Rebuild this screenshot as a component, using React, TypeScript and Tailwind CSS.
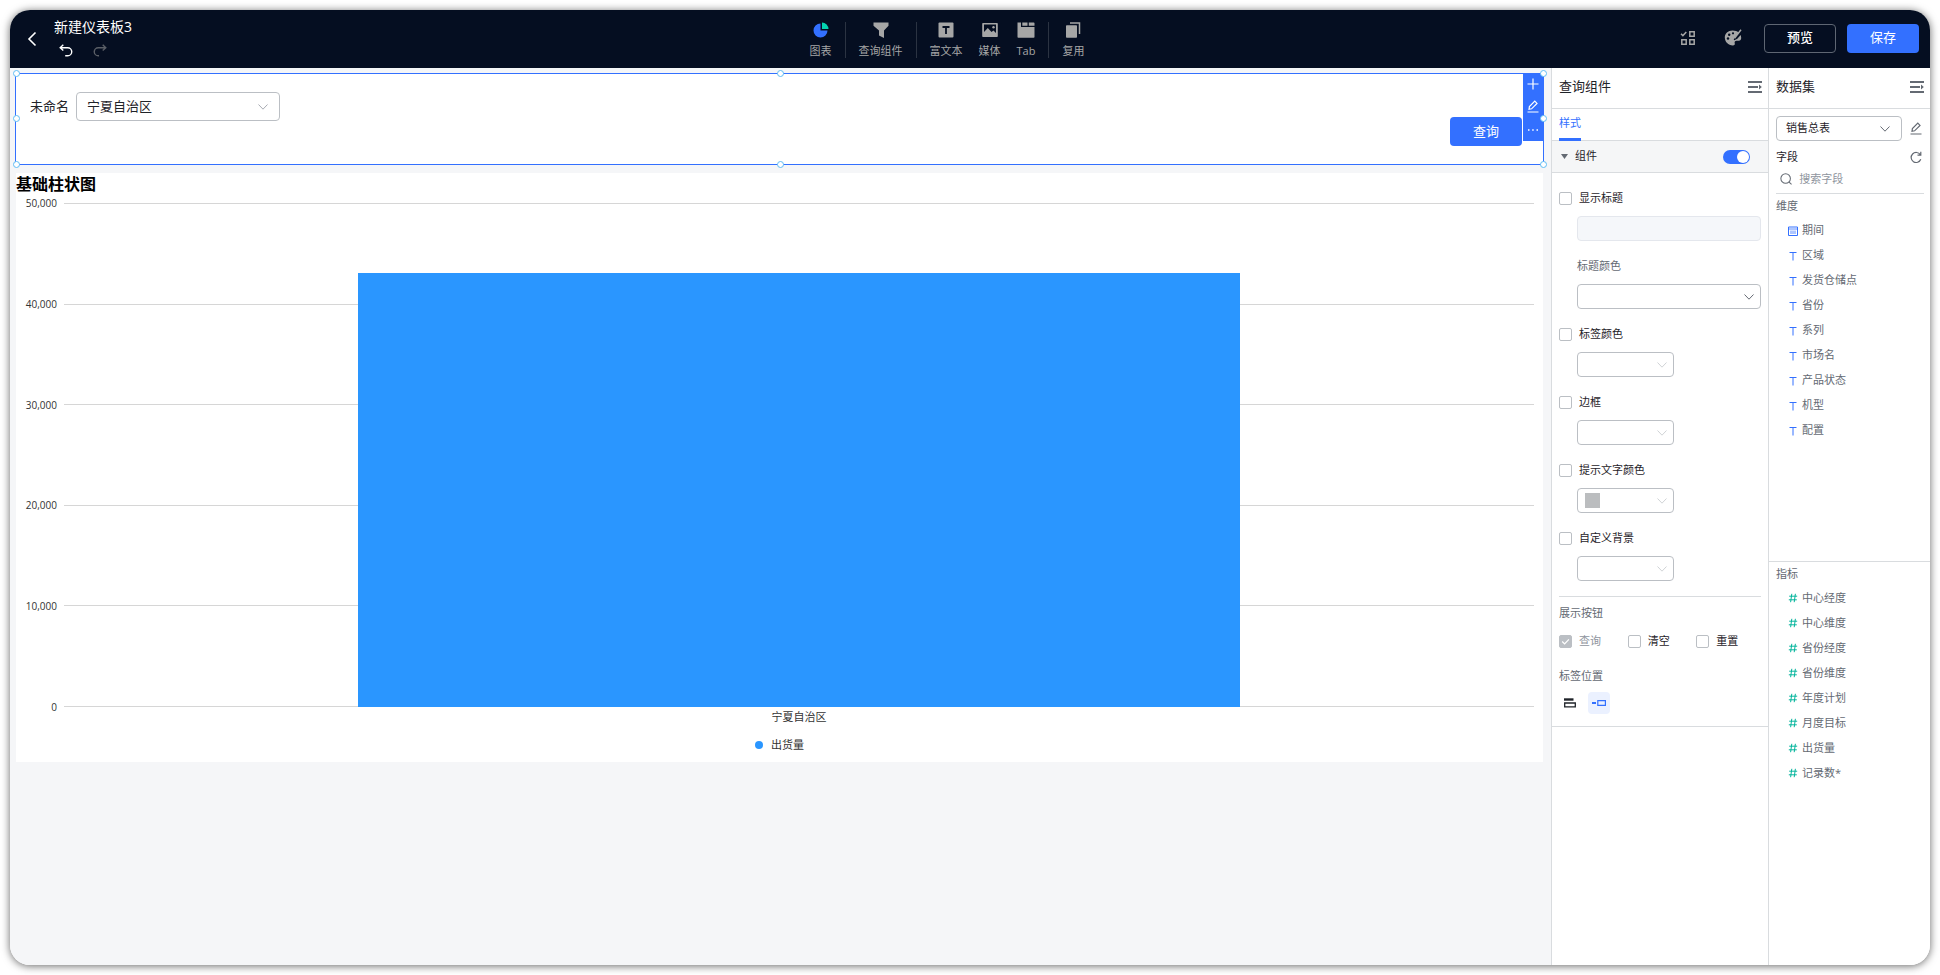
import { useState } from "react";
import type { ReactNode } from "react";

type IconProps = {
  className?: string;
};

const BackIcon = () => (
  <svg width="10" height="16" viewBox="0 0 10 16" fill="none" stroke="#fff" strokeWidth="1.6">
    <path d="M8.500 1.500L2 8l6.500 6.500" />
  </svg>
);

const UndoIcon = ({ className = "" }: IconProps) => (
  <svg className={className} width="14" height="14" viewBox="0 0 14 14" fill="none" stroke="currentColor" strokeWidth="1.4">
    <path d="M4.300 .8L1.200 3.700l3.100 2.900M1.400 3.700h7.300a4 4 0 0 1 0 8.100H6.200" />
  </svg>
);

const RedoIcon = ({ className = "" }: IconProps) => (
  <svg className={className} width="14" height="14" viewBox="0 0 14 14" fill="none" stroke="currentColor" strokeWidth="1.4">
    <path d="M9.700 .8l3.100 2.900-3.100 2.900M12.600 3.700H5.300a4 4 0 0 0 0 8.100h.7" />
  </svg>
);

const ChartIcon = () => (
  <svg width="16" height="16" viewBox="0 0 16 16">
    <path d="M7.500 1.500v7h7A7 7 0 1 1 7.500 1.500z" fill="#3370ff" />
    <path d="M9 .5A6.600 6.600 0 0 1 15.500 7H9z" fill="#04d3b0" />
  </svg>
);

const FunnelIcon = () => (
  <svg width="16" height="16" viewBox="0 0 16 16" fill="#a6a6a6">
    <path d="M.5.500h15v3.300L11 8.500V16l-5-2.500v-5L.5 3.800z" />
  </svg>
);

const RichTextIcon = () => (
  <svg width="16" height="16" viewBox="0 0 16 16">
    <rect x=".5" y=".5" width="15" height="15" rx="1" fill="#a6a6a6" />
    <path d="M4.500 5h7M8 5v7" stroke="#050e21" strokeWidth="1.800" />
  </svg>
);

const MediaIcon = () => (
  <svg width="16" height="16" viewBox="0 0 16 16">
    <path d="M1 1h14a.8.8 0 0 1 .8.8v12.400a.8.8 0 0 1-.8.8H1a.8.8 0 0 1-.8-.8V1.800A.8.8 0 0 1 1 1z" fill="#a6a6a6" />
    <path d="M2 2.500h12v8.500L11.500 8.500 9.500 10 5.800 6 2 10z" fill="#050e21" />
    <circle cx="11.500" cy="5.200" r="1.200" fill="#a6a6a6" />
  </svg>
);

const TabIcon = () => (
  <svg width="18" height="16" viewBox="0 0 18 16" fill="#a6a6a6">
    <path d="M.5.500h3.500v4.500h13.500v10a.8.8 0 0 1-.8.8H1.300a.8.8 0 0 1-.8-.8z" />
    <path d="M5.300.500h5.200v3.200H5.300zM11.800.500h4.900a.8.8 0 0 1 .8.8v2.400h-5.700z" />
  </svg>
);

const ReuseIcon = () => (
  <svg width="16" height="16" viewBox="0 0 16 16">
    <path d="M5 1h9.500v11" fill="none" stroke="#a6a6a6" strokeWidth="1.500" />
    <rect x="1" y="3.200" width="11" height="12.500" rx=".8" fill="#a6a6a6" />
  </svg>
);

const BatchIcon = () => (
  <svg width="16" height="16" viewBox="0 0 16 16" fill="none" stroke="#a6a6a6" strokeWidth="1.500">
    <path d="M1 3.700l1.900 1.900L6.300 2M9.800 1.800h4.400v4.400H9.800zM1.800 9.800h4.400v4.400H1.800zM9.800 9.800h4.400v4.400H9.800z" />
  </svg>
);

const PaletteIcon = () => (
  <svg width="18" height="18" viewBox="0 0 18 18">
    <path d="M8.500 1.500C4 1.500.8 4.500.8 8.600c0 4.300 3.500 7.900 8 7.900 2 0 2.200-1.300 1.900-2.500-.3-1.300.3-2.300 1.800-2.300h2.300c1.500 0 2.400-1.100 2.400-2.700 0-1-.2-2-.6-2.900l-3.300 3.600-3 1.600-.6-.6 1.500-3 4-4C13.400 2.200 11 1.500 8.500 1.500z" fill="#a6a6a6" />
    <path d="M17 .8l-6.500 8.400" stroke="#a6a6a6" strokeWidth="1.500" />
    <circle cx="4" cy="9.500" r="1.200" fill="#050e21" />
    <circle cx="5.200" cy="5.800" r="1.200" fill="#050e21" />
    <circle cx="9" cy="4.300" r="1.100" fill="#050e21" />
  </svg>
);

const CollapseIcon = () => (
  <svg width="14" height="14" viewBox="0 0 14 14" fill="#646a73">
    <path d="M0 1h14v2H0zM0 6h10v2H0zM0 11h14v2H0zM11 4.500L13.800 7 11 9.500z" />
  </svg>
);

const ChevronIcon = ({ className = "" }: IconProps) => (
  <svg className={className} width="10" height="6" viewBox="0 0 10 6" fill="none" stroke="currentColor" strokeWidth="1">
    <path d="M.5.500L5 5.200 9.500.500" />
  </svg>
);

const PencilIcon = ({ className = "" }: IconProps) => (
  <svg className={className} width="12" height="13" viewBox="0 0 12 13" fill="none" stroke="currentColor" strokeWidth="1.200">
    <path d="M2 9.300l.4-2.700L7.800 1.200l2.200 2.200-5.400 5.400zM.5 12h11" />
  </svg>
);

const RefreshIcon = () => (
  <svg width="12" height="13" viewBox="0 0 12 13" fill="none" stroke="#646a73" strokeWidth="1.200">
    <path d="M10.800 8.300a5 5 0 1 1-.5-4.600M10.800.800v3.400H7.500" />
  </svg>
);

const SearchIcon = () => (
  <svg width="14" height="14" viewBox="0 0 14 14" fill="none" stroke="#646a73" strokeWidth="1.200">
    <circle cx="6.500" cy="6.500" r="5.500" />
    <path d="M10.500 10.500l2.800 2.800" />
  </svg>
);

const CalendarIcon = () => (
  <svg width="10" height="10" viewBox="0 0 10 10" fill="none" stroke="#3370ff">
    <path d="M.5 1h9v8.500h-9z" />
    <path d="M.5 3h9M3 4.500v3.500M5 4.500v3.500M7 4.500v3.500" strokeWidth=".8" />
  </svg>
);

const TextFieldIcon = () => (
  <svg width="10" height="10" viewBox="0 0 10 10" fill="none" stroke="#3370ff" strokeWidth="1">
    <path d="M1.500 1.500h7M5 1.500V9.500" />
  </svg>
);

const NumberFieldIcon = () => (
  <svg width="10" height="10" viewBox="0 0 10 10" fill="none" stroke="#04b49c" strokeWidth="1">
    <path d="M3.800.800L2.600 9.200M7.400.800L6.200 9.200M1.200 3.200h8M.8 6.800h8" />
  </svg>
);

const tools: { label: string; icon: ReactNode; divider?: boolean }[] = [
  { label: "图表", icon: <ChartIcon />, divider: true },
  { label: "查询组件", icon: <FunnelIcon />, divider: true },
  { label: "富文本", icon: <RichTextIcon /> },
  { label: "媒体", icon: <MediaIcon /> },
  { label: "Tab", icon: <TabIcon />, divider: true },
  { label: "复用", icon: <ReuseIcon /> },
];

const Header = () => (
  <header className="flex h-[58px] shrink-0 items-center justify-between bg-[#050e21] pr-[11px] pl-[17px]">
    <div className="flex w-[187px] items-center gap-[17px]">
      <button type="button" aria-label="返回">
        <BackIcon />
      </button>
      <div className="flex flex-col gap-[7px] pb-[3px]">
        <h1 className="text-sm leading-5 text-white">新建仪表板3</h1>
        <div className="flex gap-5 pl-[5px]">
          <button type="button" aria-label="撤销" className="text-white">
            <UndoIcon />
          </button>
          <button type="button" aria-label="重做" className="text-[#5a5e66]">
            <RedoIcon />
          </button>
        </div>
      </div>
    </div>
    <nav className="flex items-center pt-[2px]">
      {tools.map((tool) => (
        <div key={tool.label} className="flex items-center">
          <button
            type="button"
            className="flex flex-col items-center gap-[5px] px-2 text-[11px] leading-4 text-[#a6a6a6]"
          >
            {tool.icon}
            {tool.label}
          </button>
          {tool.divider && <span className="mx-[5px] h-9 w-px bg-[#2b3342]" />}
        </div>
      ))}
    </nav>
    <div className="flex items-center pb-[2px]">
      <button type="button" aria-label="批量设置" className="mr-7">
        <BatchIcon />
      </button>
      <button type="button" aria-label="外观" className="mr-[22px]">
        <PaletteIcon />
      </button>
      <button
        type="button"
        className="mr-[11px] h-[29px] w-[72px] rounded-sm border border-[#5f6673] text-[13px] font-medium text-white"
      >
        预览
      </button>
      <button type="button" className="h-[29px] w-[72px] rounded-sm bg-[#3370ff] text-[13px] text-white">
        保存
      </button>
    </div>
  </header>
);

const handles = [
  "-top-1 -left-[3px]",
  "-top-1 left-1/2 -ml-[3px]",
  "-top-1 -right-1",
  "top-1/2 -mt-1 -left-[3px]",
  "top-1/2 -mt-1 -right-1",
  "-bottom-1 -left-[3px]",
  "-bottom-1 left-1/2 -ml-[3px]",
  "-bottom-1 -right-1",
];

const QueryBar = () => (
  <section className="relative mr-[7px] ml-[5px] flex h-[92px] justify-between border border-[#3370ff] bg-white pt-[18px] pr-[21px] pl-[14px]">
    <div className="flex h-[29px] items-center gap-[7px]">
      <label htmlFor="region" className="text-[13px] text-[#1f2329]">
        未命名
      </label>
      <div className="relative">
        <select
          id="region"
          className="h-[29px] w-[204px] appearance-none rounded-sm border border-[#bbbfc4] bg-white pl-[10px] text-[13px] text-[#1f2329]"
        >
          <option>宁夏自治区</option>
        </select>
        <ChevronIcon className="pointer-events-none absolute top-3 right-3 text-[#a8abb2]" />
      </div>
    </div>
    <button type="button" className="mt-[25px] h-[29px] w-[72px] rounded-sm bg-[#3370ff] text-[13px] text-white">
      查询
    </button>
    <div className="absolute -top-px right-0 flex w-5 flex-col items-center bg-[#3370ff] text-white">
      <button type="button" aria-label="添加" className="flex h-[22px] items-center">
        <svg width="12" height="12" viewBox="0 0 12 12" stroke="currentColor" strokeWidth="1.200">
          <path d="M6 .5v11M.5 6h11" />
        </svg>
      </button>
      <button type="button" aria-label="编辑" className="flex h-[23px] items-center">
        <PencilIcon />
      </button>
      <button type="button" aria-label="更多" className="flex h-[23px] items-center">
        <svg width="10" height="2" viewBox="0 0 10 2" fill="currentColor">
          <path d="M0 .3h1.500v1.500H0zM4.200.300h1.500v1.500H4.200zM8.500.300H10v1.500H8.500z" />
        </svg>
      </button>
    </div>
    {handles.map((position) => (
      <span key={position} className={`absolute size-[7px] rounded-full border border-[#60bdf5] bg-white ${position}`} />
    ))}
  </section>
);

const axisMax = 50000;
const ticks = ["50,000", "40,000", "30,000", "20,000", "10,000", "0"];
const bars = [{ name: "宁夏自治区", value: 43050 }];

const BarChart = () => (
  <section className="mt-2 mr-2 ml-[6px] bg-white pb-[9px]">
    <h2 className="text-base leading-[22px] font-bold text-black">基础柱状图</h2>
    <div className="flex gap-[7px] pr-[9px] pl-[9px]">
      <div className="flex h-[520px] w-8 flex-col justify-between text-right text-[10px] leading-4 text-[#333]">
        {ticks.map((tick) => (
          <span key={tick}>{tick}</span>
        ))}
      </div>
      <div className="flex-1">
        <div className="relative mt-2 h-[504px]">
          <div className="flex h-full flex-col justify-between">
            {ticks.map((tick) => (
              <span key={tick} className="h-px bg-[#d6d6d6]" />
            ))}
          </div>
          <div className="absolute inset-0 flex items-end">
            {bars.map((bar) => (
              <div key={bar.name} className="flex h-full flex-1 items-end px-[20%]">
                <div className="w-full bg-[#2a96ff]" style={{ height: `${(bar.value / axisMax) * 100}%` }} />
              </div>
            ))}
          </div>
        </div>
        <div className="flex pt-[2px]">
          {bars.map((bar) => (
            <span key={bar.name} className="flex-1 text-center text-[11px] leading-4 text-[#333]">
              {bar.name}
            </span>
          ))}
        </div>
      </div>
    </div>
    <div className="mt-3 flex items-center justify-center gap-2 text-[11px] leading-4 text-[#333]">
      <span className="size-2 rounded-full bg-[#2a96ff]" />
      出货量
    </div>
  </section>
);

type CheckProps = {
  id: string;
  label: string;
  disabled?: boolean;
};

const Check = ({ id, label, disabled = false }: CheckProps) => (
  <div className="flex h-4 items-center gap-[7px]">
    <span className="relative flex">
      <input
        id={id}
        type="checkbox"
        defaultChecked={disabled}
        disabled={disabled}
        className="size-[13px] appearance-none rounded-[2px] border border-[#bbbfc4] bg-white checked:border-[#3370ff] checked:bg-[#3370ff] disabled:border-[#bbbfc4] disabled:bg-[#bbbfc4]"
      />
      {disabled && (
        <svg className="absolute inset-0" width="13" height="13" viewBox="0 0 13 13" fill="none" stroke="#fff" strokeWidth="1.200">
          <path d="M3.200 6.500l2.400 2.400 4.300-4.600" />
        </svg>
      )}
    </span>
    <label htmlFor={id} className={`text-[11px] leading-4 ${disabled ? "text-[#8f959e]" : "text-[#1f2329]"}`}>
      {label}
    </label>
  </div>
);

type ColorSelectProps = {
  label: string;
  wide?: boolean;
  swatch?: boolean;
};

const ColorSelect = ({ label, wide = false, swatch = false }: ColorSelectProps) => (
  <div className={`relative ml-[18px] h-[25px] ${wide ? "" : "w-[97px]"}`}>
    <select aria-label={label} className="h-full w-full appearance-none rounded-sm border border-[#bbbfc4] bg-white" />
    {swatch && <span className="pointer-events-none absolute top-[5px] left-2 size-[15px] bg-[#bbbdbf]" />}
    <ChevronIcon
      className={`pointer-events-none absolute top-[10px] right-[7px] ${wide ? "text-[#646a73]" : "text-[#d0d3d6]"}`}
    />
  </div>
);

const colorOptions = [
  { id: "label-color", label: "标签颜色" },
  { id: "border", label: "边框" },
  { id: "hint-color", label: "提示文字颜色", swatch: true },
  { id: "background", label: "自定义背景" },
];

const PanelTitle = ({ children }: { children: ReactNode }) => (
  <div className="flex h-[41px] shrink-0 items-center justify-between border-b border-[#d9dcdf] pr-[6px] pb-[3px] pl-[7px] text-[13px] text-[#1f2329]">
    <h2>{children}</h2>
    <button type="button" aria-label="收起">
      <CollapseIcon />
    </button>
  </div>
);

const StylePanel = () => {
  const [enabled, setEnabled] = useState(true);

  return (
    <aside className="w-[217px] shrink-0 border-l border-[#d9dcdf] bg-white">
      <PanelTitle>查询组件</PanelTitle>
      <div className="flex h-8 border-b border-[#d9dcdf] px-[7px]">
        <button type="button" className="-mb-px border-b-3 border-[#3370ff] text-[11px] text-[#3370ff]">
          样式
        </button>
      </div>
      <div className="flex h-8 items-center border-b border-[#d9dcdf] bg-[#f5f6f7] pr-[18px] pl-[9px] text-[11px] text-[#1f2329]">
        <svg width="7" height="5" viewBox="0 0 7 5" fill="#646a73">
          <path d="M0 0h7L3.500 5z" />
        </svg>
        <label htmlFor="component-enabled" className="ml-[7px] flex-1">
          组件
        </label>
        <input
          id="component-enabled"
          type="checkbox"
          role="switch"
          checked={enabled}
          onChange={() => setEnabled(!enabled)}
          className="flex h-[14px] w-[27px] appearance-none items-center rounded-full bg-[#bbbfc4] px-px before:size-3 before:rounded-full before:bg-white checked:justify-end checked:bg-[#3370ff]"
        />
      </div>
      <div className="border-b border-[#d9dcdf] pt-[17px] pr-[7px] pb-[12px] pl-[7px]">
        <div className="flex flex-col gap-[17px]">
          <div className="flex flex-col gap-[10px]">
            <Check id="show-title" label="显示标题" />
            <input
              aria-label="标题"
              disabled
              className="ml-[18px] h-[25px] rounded-sm border border-[#e4e7ed] bg-[#f5f7fa] px-2 text-[11px]"
            />
          </div>
          <div className="flex flex-col gap-[10px]">
            <span className="ml-[18px] text-[11px] leading-4 text-[#646a73]">标题颜色</span>
            <ColorSelect label="标题颜色" wide />
          </div>
          {colorOptions.map((option) => (
            <div key={option.id} className="flex flex-col gap-[10px]">
              <Check id={option.id} label={option.label} />
              <ColorSelect label={option.label} swatch={option.swatch} />
            </div>
          ))}
        </div>
        <hr className="mt-[15px] border-[#d9dcdf]" />
        <p className="mt-2 text-[11px] leading-4 text-[#646a73]">展示按钮</p>
        <div className="mt-3 grid grid-cols-3 gap-x-1">
          <Check id="button-query" label="查询" disabled />
          <Check id="button-clear" label="清空" />
          <Check id="button-reset" label="重置" />
        </div>
        <p className="mt-[19px] text-[11px] leading-4 text-[#646a73]">标签位置</p>
        <div className="mt-2 flex gap-[7px]">
          <button type="button" aria-label="顶部" className="flex size-[22px] items-center justify-center">
            <svg width="12" height="10" viewBox="0 0 12 10" fill="none" stroke="#1f2329" strokeWidth="1.300">
              <path d="M0 1.500h9.500" strokeWidth="2.400" />
              <path d="M.7 5h10.600v3.800H.7z" />
            </svg>
          </button>
          <button
            type="button"
            aria-label="左侧"
            className="flex size-[22px] items-center justify-center rounded-sm bg-[#ebf1ff]"
          >
            <svg width="14" height="6" viewBox="0 0 14 6" fill="none" stroke="#3370ff" strokeWidth="1.200">
              <path d="M0 3h4" strokeWidth="2" />
              <path d="M5.800.700h7.600v4.600H5.800z" />
            </svg>
          </button>
        </div>
      </div>
    </aside>
  );
};

const dimensions = ["期间", "区域", "发货仓储点", "省份", "系列", "市场名", "产品状态", "机型", "配置"];
const measures = ["中心经度", "中心维度", "省份经度", "省份维度", "年度计划", "月度目标", "出货量", "记录数*"];

type FieldListProps = {
  title: string;
  fields: string[];
  renderIcon: (field: string) => ReactNode;
};

const FieldList = ({ title, fields, renderIcon }: FieldListProps) => (
  <>
    <h3 className="px-[7px] text-[11px] leading-4 text-[#646a73]">{title}</h3>
    <ul className="mt-1 pl-[19px]">
      {fields.map((field) => (
        <li key={field} className="flex h-[25px] items-center gap-1 text-[11px] text-[#646a73]">
          {renderIcon(field)}
          {field}
        </li>
      ))}
    </ul>
  </>
);

const DatasetPanel = () => (
  <aside className="flex w-[162px] shrink-0 flex-col border-l border-[#d9dcdf] bg-white">
    <PanelTitle>数据集</PanelTitle>
    <div className="flex items-center justify-between pt-[7px] pr-2 pl-[7px]">
      <div className="relative">
        <select
          aria-label="数据集"
          className="block h-[25px] w-[126px] appearance-none rounded-sm border border-[#bbbfc4] bg-white pl-[9px] text-[11px] text-[#1f2329]"
        >
          <option>销售总表</option>
        </select>
        <ChevronIcon className="pointer-events-none absolute top-[10px] right-3 text-[#646a73]" />
      </div>
      <button type="button" aria-label="编辑数据集" className="text-[#646a73]">
        <PencilIcon />
      </button>
    </div>
    <div className="flex items-center justify-between pt-2 pr-2 pl-[7px]">
      <h3 className="text-[11px] leading-4 text-[#1f2329]">字段</h3>
      <button type="button" aria-label="刷新">
        <RefreshIcon />
      </button>
    </div>
    <div className="mr-[6px] ml-[7px] flex h-[29px] shrink-0 items-center gap-[7px] border-b border-[#d9dcdf] pl-1">
      <SearchIcon />
      <input
        aria-label="搜索字段"
        placeholder="搜索字段"
        className="w-full min-w-0 text-[11px] text-[#1f2329] outline-none placeholder:text-[#8f959e]"
      />
    </div>
    <div className="flex-10 border-b border-[#d9dcdf] pt-1">
      <FieldList
        title="维度"
        fields={dimensions}
        renderIcon={(field) => (field === "期间" ? <CalendarIcon /> : <TextFieldIcon />)}
      />
    </div>
    <div className="flex-11 pt-1">
      <FieldList title="指标" fields={measures} renderIcon={() => <NumberFieldIcon />} />
    </div>
  </aside>
);

const App = () => (
  <div className="flex min-h-screen bg-white p-[10px] font-['Open_Sans','Noto_Sans_CJK_SC',sans-serif]">
    <div className="flex flex-1 flex-col overflow-hidden rounded-[20px] bg-white shadow-[0_1px_8px_rgba(0,0,0,0.6)]">
      <Header />
      <div className="flex flex-1">
        <main className="min-w-0 flex-1 bg-[#f5f6f8] pt-[5px]">
          <QueryBar />
          <BarChart />
        </main>
        <StylePanel />
        <DatasetPanel />
      </div>
    </div>
  </div>
);

export default App;
